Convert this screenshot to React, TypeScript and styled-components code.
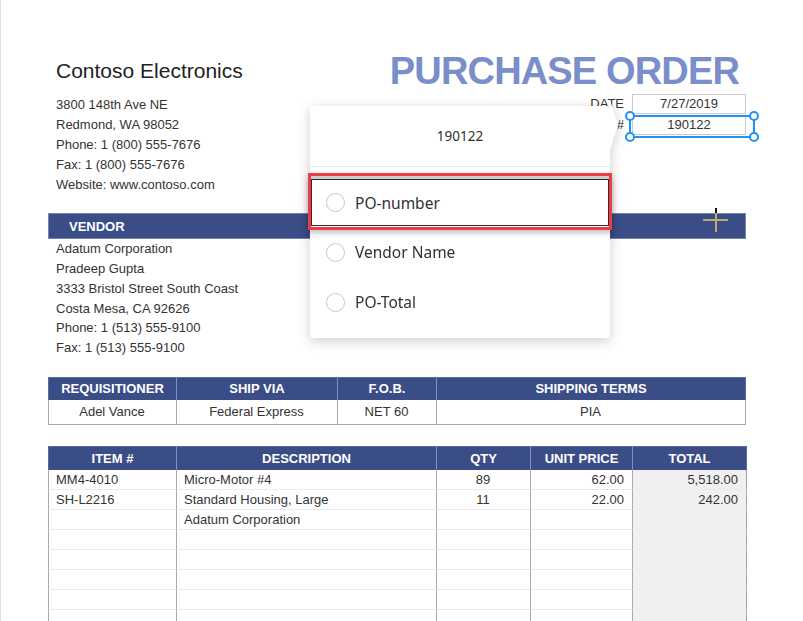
import React from "react";
import styled, { createGlobalStyle } from "styled-components";

const Global = createGlobalStyle`
  html, body { margin: 0; padding: 0; background: #fff; overflow: hidden; }
  body { font-family: "Liberation Sans", Arial, sans-serif; }
  * { box-sizing: border-box; }
`;

const Page = styled.div`
  position: relative;
  width: 803px;
  height: 621px;
  overflow: hidden;
  border-left: 1px solid #dedede;
  padding: 0 57px 0 47px;
  color: #333;
`;

const Header = styled.header`
  display: flex;
  justify-content: space-between;
  align-items: flex-start;
`;

const Company = styled.div`
  padding: 59px 0 0 8px;
`;

const CompanyName = styled.div`
  font-size: 21px;
  line-height: 24px;
  color: #222;
`;

const Address = styled.div`
  margin-top: 12px;
  font-size: 13px;
  line-height: 20.1px;
`;

const TitleBlock = styled.div`
  display: flex;
  flex-direction: column;
  align-items: flex-end;
  padding-top: 51px;
`;

const Title = styled.h1`
  margin: 0 7px 0 0;
  font-size: 38px;
  line-height: 40px;
  font-weight: 700;
  letter-spacing: -0.85px;
  color: #7a8fca;
`;

const FieldRow = styled.div<{ $mt: number }>`
  display: flex;
  align-items: center;
  gap: 8px;
  margin-top: ${(p) => p.$mt}px;
`;

const FieldLabel = styled.span`
  font-size: 13px;
  line-height: 20px;
`;

const FieldSlot = styled.div`
  position: relative;
`;

const FieldBox = styled.div`
  width: 114px;
  height: 20px;
  border: 1px solid #c9c9c9;
  text-align: center;
  font-size: 13px;
  line-height: 18px;
`;

const Selection = styled.div`
  position: absolute;
  left: -3px;
  right: -9px;
  top: 0;
  bottom: -3px;
  border: 2px solid #2490f5;
`;

const Handle = styled.span<{ $x: "left" | "right"; $y: "top" | "bottom" }>`
  position: absolute;
  width: 10px;
  height: 10px;
  border-radius: 50%;
  background: #fff;
  border: 2px solid #2490f5;
  ${(p) => p.$x}: -6px;
  ${(p) => p.$y}: -6px;
`;

const SectionBar = styled.div`
  position: relative;
  margin-top: 18px;
  height: 26px;
  background: #3b4d87;
  border: 1px solid #7886b3;
  color: #fff;
  font-weight: 700;
  font-size: 13px;
  line-height: 25px;
  padding-left: 20px;
`;

const Cursor = styled.svg`
  position: absolute;
  left: 654px;
  top: -6px;
`;

const VendorInfo = styled.div`
  padding-left: 8px;
  font-size: 13px;
  line-height: 19.7px;
`;

const Table = styled.table<{ $mt: number }>`
  width: 698px;
  margin-top: ${(p) => p.$mt}px;
  border-collapse: separate;
  border-spacing: 0;
  table-layout: fixed;
  font-size: 13px;
`;

const Th = styled.th<{ $h: number }>`
  height: ${(p) => p.$h}px;
  padding: 0;
  background: #3b4d87;
  color: #fff;
  font-weight: 700;
  font-size: 13px;
  text-align: center;
  border-top: 1px solid #5b6b9c;
  border-right: 1px solid #8190bb;
  &:first-child { border-left: 1px solid #5b6b9c; }
  &:last-child { border-right: 1px solid #5b6b9c; }
`;

const Td = styled.td<{ $align?: string; $shade?: boolean; $h: number; $line: string }>`
  height: ${(p) => p.$h}px;
  padding: 0 8px 0 7px;
  text-align: ${(p) => p.$align || "left"};
  background: ${(p) => (p.$shade ? "#f0f0f0" : "#fff")};
  border-right: 1px solid #a9a9a9;
  border-bottom: 1px solid ${(p) => p.$line};
  white-space: nowrap;
  overflow: hidden;
  color: #333;
  &:first-child { border-left: 1px solid #a9a9a9; }
`;

const Popover = styled.div`
  position: absolute;
  left: 309px;
  top: 106px;
  width: 300px;
  background: #fff;
  border-radius: 4px;
  filter: drop-shadow(0 3px 6px rgba(0, 0, 0, 0.2));
  font-family: "Noto Sans", "Open Sans", sans-serif;
  color: #323130;
  z-index: 5;
  &::after {
    content: "";
    position: absolute;
    left: 100%;
    top: -6px;
    width: 8px;
    height: 50px;
    background: #fff;
    clip-path: polygon(0 0, 100% 50%, 0 100%);
  }
`;

const PopValue = styled.div`
  height: 61px;
  display: flex;
  align-items: center;
  justify-content: center;
  border-bottom: 1px solid #e8e8e8;
  font-size: 13.5px;
`;

const OptionList = styled.div`
  padding: 10px 0 11px;
`;

const Option = styled.div<{ $selected?: boolean }>`
  position: relative;
  display: flex;
  align-items: center;
  gap: 10px;
  height: ${(p) => (p.$selected ? 47 : 50)}px;
  margin: ${(p) => (p.$selected ? "2px 1px 1px" : "0")};
  padding-left: ${(p) => (p.$selected ? 14 : 16)}px;
  border: ${(p) => (p.$selected ? "1px solid #2b2b2b" : "none")};
  font-size: 15.5px;
  ${(p) =>
    p.$selected &&
    `
    &::before {
      content: "";
      position: absolute;
      top: -7px;
      left: -4px;
      right: -4px;
      bottom: -5px;
      border: 3px solid #ee3d42;
      box-shadow: inset 0 3px 0 #cdcdcd, 0 3px 6px rgba(0, 0, 0, 0.25);
      pointer-events: none;
    }
  `}
`;

const Radio = styled.span`
  width: 19px;
  height: 19px;
  border-radius: 50%;
  border: 1.5px solid #c8c8c8;
  flex: none;
`;

const t1Cols = [129, 161, 99, 309];
const t2Cols = [129, 260, 94, 102, 114];

const items = [
  ["MM4-4010", "Micro-Motor #4", "89", "62.00", "5,518.00"],
  ["SH-L2216", "Standard Housing, Large", "11", "22.00", "242.00"],
  ["", "Adatum Corporation", "", "", ""],
  ["", "", "", "", ""],
  ["", "", "", "", ""],
  ["", "", "", "", ""],
  ["", "", "", "", ""],
  ["", "", "", "", ""],
];
const aligns = ["left", "left", "center", "right", "right"];

export default function App() {
  return (
    <>
      <Global />
      <Page>
        <Header>
          <Company>
            <CompanyName>Contoso Electronics</CompanyName>
            <Address>
              <div>3800 148th Ave NE</div>
              <div>Redmond, WA 98052</div>
              <div>Phone: 1 (800) 555-7676</div>
              <div>Fax: 1 (800) 555-7676</div>
              <div>Website: www.contoso.com</div>
            </Address>
          </Company>
          <TitleBlock>
            <Title>PURCHASE ORDER</Title>
            <FieldRow $mt={3}>
              <FieldLabel>DATE</FieldLabel>
              <FieldSlot>
                <FieldBox>7/27/2019</FieldBox>
              </FieldSlot>
            </FieldRow>
            <FieldRow $mt={1}>
              <FieldLabel>PO #</FieldLabel>
              <FieldSlot>
                <FieldBox>190122</FieldBox>
                <Selection>
                  <Handle $x="left" $y="top" />
                  <Handle $x="right" $y="top" />
                  <Handle $x="left" $y="bottom" />
                  <Handle $x="right" $y="bottom" />
                </Selection>
              </FieldSlot>
            </FieldRow>
          </TitleBlock>
        </Header>

        <SectionBar>
          VENDOR
          <Cursor width="26" height="25" viewBox="0 0 26 25">
            <line x1="13" y1="0" x2="13" y2="5" stroke="#111" strokeWidth="2" />
            <line x1="13" y1="5" x2="13" y2="24" stroke="#bfa86c" strokeWidth="2" />
            <line x1="0" y1="12" x2="25" y2="12" stroke="#bfa86c" strokeWidth="2" />
          </Cursor>
        </SectionBar>
        <VendorInfo>
          <div>Adatum Corporation</div>
          <div>Pradeep Gupta</div>
          <div>3333 Bristol Street South Coast</div>
          <div>Costa Mesa, CA 92626</div>
          <div>Phone: 1 (513) 555-9100</div>
          <div>Fax: 1 (513) 555-9100</div>
        </VendorInfo>

        <Table $mt={19}>
          <colgroup>
            {t1Cols.map((w, i) => (
              <col key={i} style={{ width: w }} />
            ))}
          </colgroup>
          <thead>
            <tr>
              <Th $h={23}>REQUISITIONER</Th>
              <Th $h={23}>SHIP VIA</Th>
              <Th $h={23}>F.O.B.</Th>
              <Th $h={23}>SHIPPING TERMS</Th>
            </tr>
          </thead>
          <tbody>
            <tr>
              <Td $h={25} $align="center" $line="#a9a9a9">Adel Vance</Td>
              <Td $h={25} $align="center" $line="#a9a9a9">Federal Express</Td>
              <Td $h={25} $align="center" $line="#a9a9a9">NET 60</Td>
              <Td $h={25} $align="center" $line="#a9a9a9">PIA</Td>
            </tr>
          </tbody>
        </Table>

        <Table $mt={21}>
          <colgroup>
            {t2Cols.map((w, i) => (
              <col key={i} style={{ width: w }} />
            ))}
          </colgroup>
          <thead>
            <tr>
              <Th $h={24}>ITEM #</Th>
              <Th $h={24}>DESCRIPTION</Th>
              <Th $h={24}>QTY</Th>
              <Th $h={24}>UNIT PRICE</Th>
              <Th $h={24}>TOTAL</Th>
            </tr>
          </thead>
          <tbody>
            {items.map((row, r) => (
              <tr key={r}>
                {row.map((c, i) => (
                  <Td key={i} $h={20} $align={aligns[i]} $shade={i === 4} $line="#ebebeb">
                    {c}
                  </Td>
                ))}
              </tr>
            ))}
          </tbody>
        </Table>

        <Popover>
          <PopValue>190122</PopValue>
          <OptionList>
            <Option $selected>
              <Radio />
              PO-number
            </Option>
            <Option>
              <Radio />
              Vendor Name
            </Option>
            <Option>
              <Radio />
              PO-Total
            </Option>
          </OptionList>
        </Popover>
      </Page>
    </>
  );
}
